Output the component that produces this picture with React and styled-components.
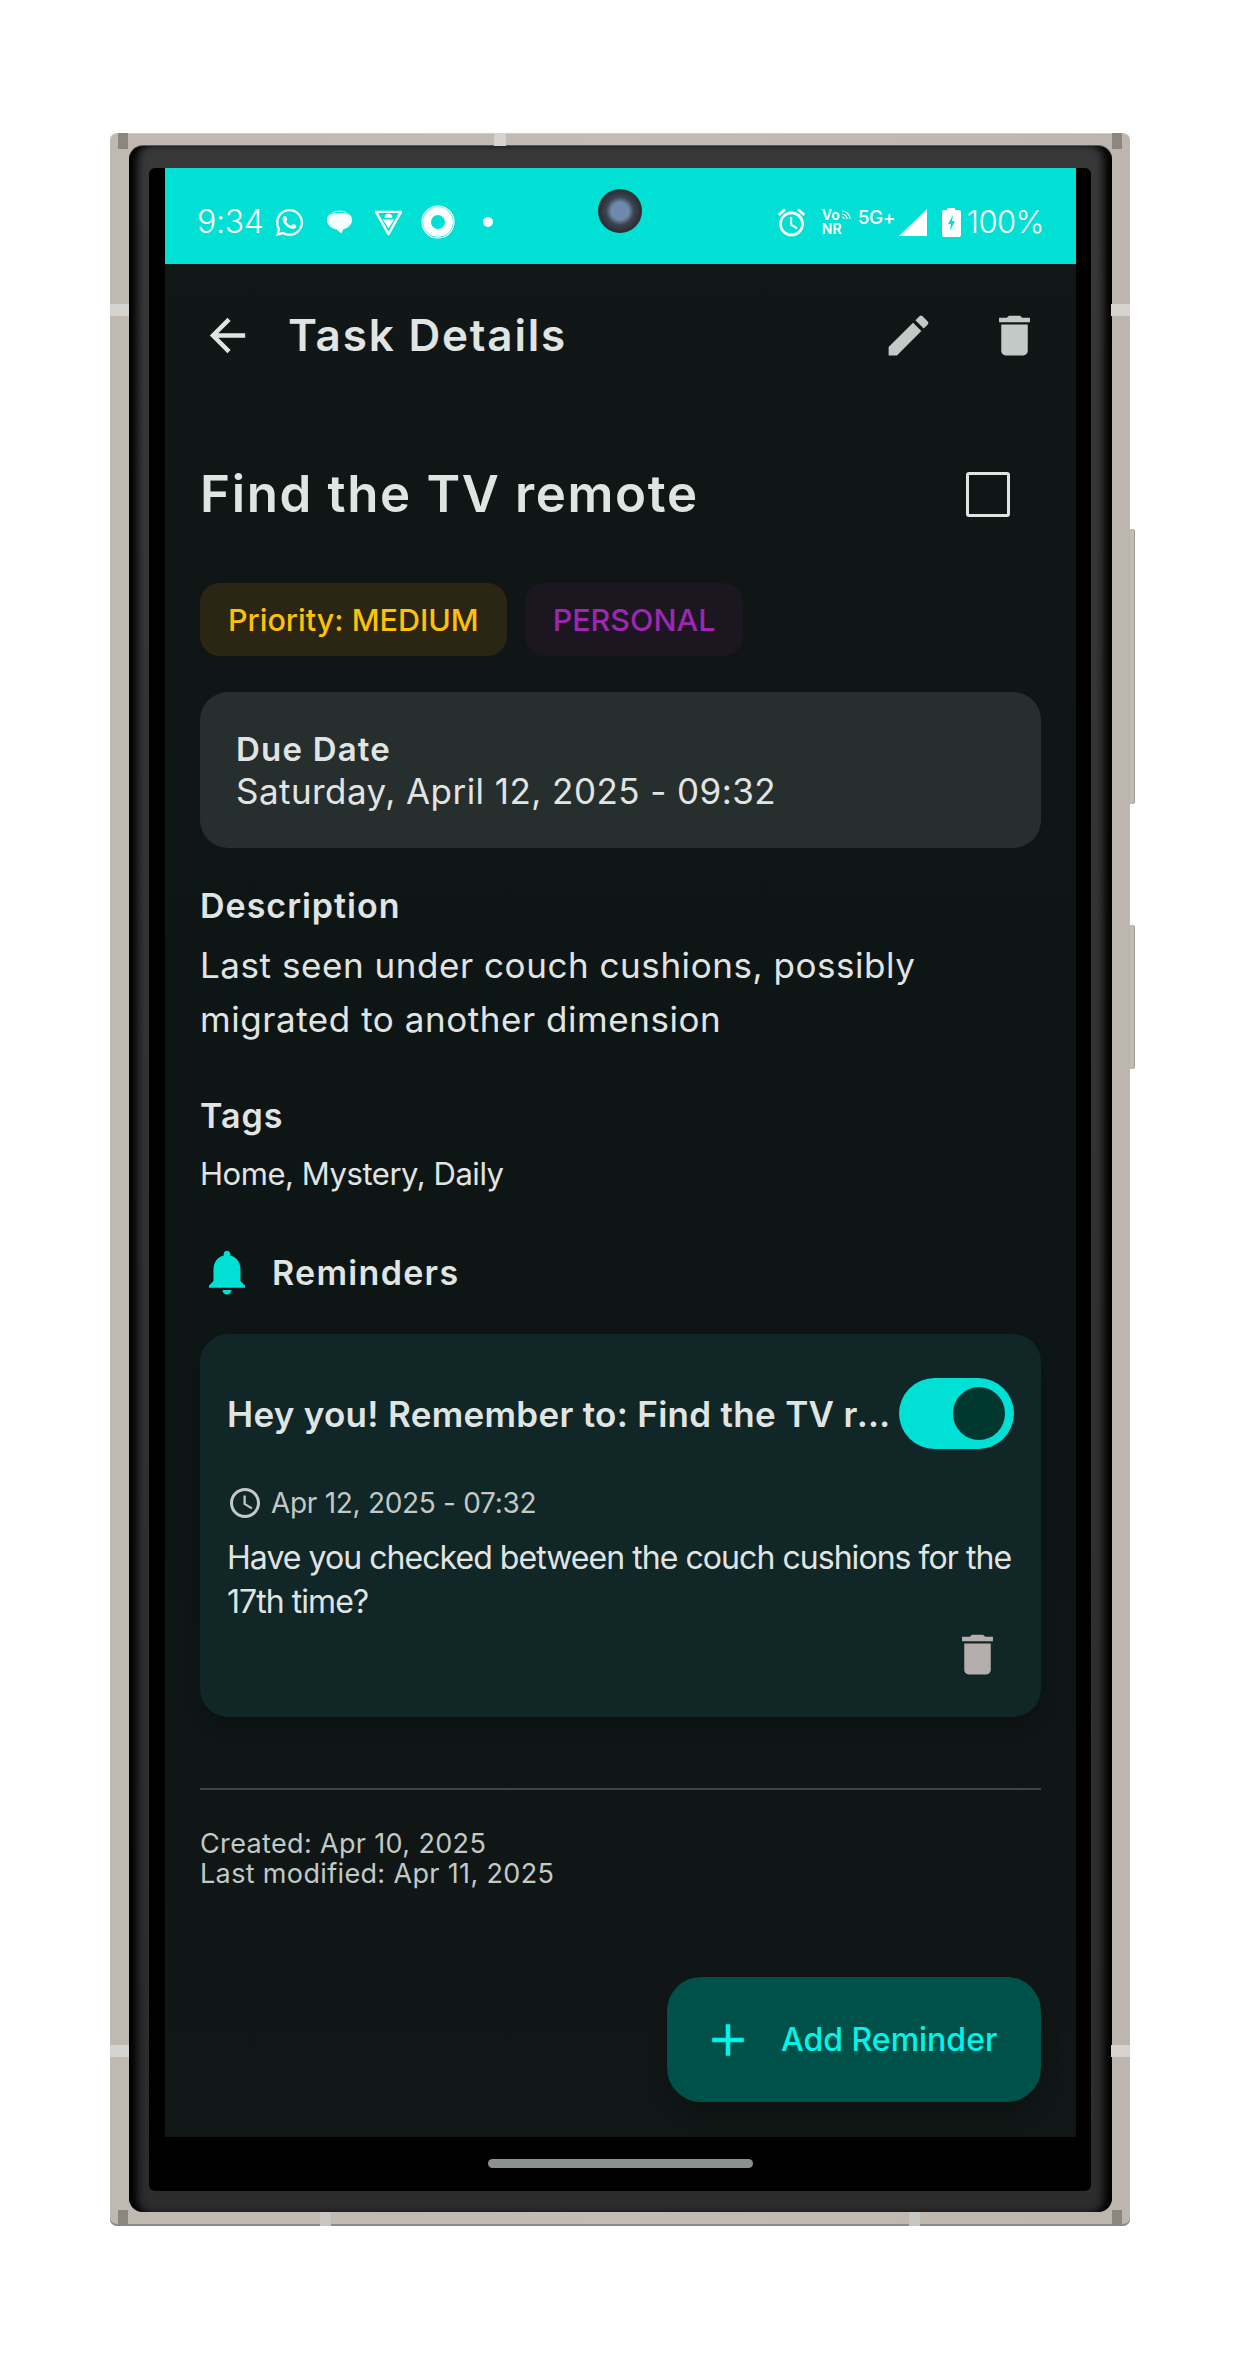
import React from 'react';
import styled, { createGlobalStyle } from 'styled-components';
import { MdArrowBack, MdEdit, MdDelete, MdNotifications, MdAccessTime, MdAdd, MdOutlineAlarm } from 'react-icons/md';
import { FaWhatsapp } from 'react-icons/fa';

const Global = createGlobalStyle`
  * { box-sizing: border-box; }
  html, body { margin: 0; background: #fff; }
  body { font-family: Inter, "Liberation Sans", sans-serif; }
`;

const Page = styled.div`
  width: 1245px;
  height: 2359px;
  padding: 133px 115px 0 110px;
`;
const Frame = styled.div`
  position: relative;
  height: 2093px;
  padding: 13px 18px 14px 19px;
  border-radius: 7px;
  background: linear-gradient(90deg, #bfb9b2 0%, #c2bcb5 50%, #bcb6af 100%);
  box-shadow: inset 0 1px 0 #d0ccc6, inset 0 -2px 0 #8f8b85;
`;
const CornerTab = styled.span`
  position: absolute;
  width: 10px;
  height: 16px;
  background: #8b8780;
  ${p => p.$v}: 0;
  ${p => p.$h}: 8px;
`;
const Band = styled.span`
  position: absolute;
  background: #d6d4d0;
`;
const TopBand = styled(Band)`
  top: 0; width: 12px; height: 13px; left: ${p => p.$x}px;
`;
const BottomBand = styled(Band)`
  bottom: 0; width: 11px; height: 14px; left: ${p => p.$x}px; background: #c8c6c2;
`;
const SideBand = styled(Band)`
  width: 19px; height: 12px; top: ${p => p.$y}px; ${p => p.$side}: 0;
`;
const SideKey = styled.span`
  position: absolute;
  right: -5px;
  width: 5px;
  top: ${p => p.$y}px;
  height: ${p => p.$h}px;
  background: #c2bcb5;
  border-radius: 0 3px 3px 0;
  box-shadow: inset -1px 0 0 #a09c95;
`;
const Bezel = styled.div`
  height: 100%;
  padding: 22px 21px 21px 20px;
  border-radius: 14px;
  background: linear-gradient(180deg, #383838 0%, #2c2c2c 100%);
  box-shadow: inset 12px 0 8px -4px #000, inset -12px 0 8px -4px #000, 0 -1px 0 #5c5a57;
`;
const Glass = styled.div`
  height: 100%;
  padding: 0 15px 0 16px;
  border-radius: 6px;
  background: #000;
  display: flex;
  flex-direction: column;
`;
const Screen = styled.div`
  position: relative;
  height: 1969px;
  background: linear-gradient(180deg, #111716 0%, #0e1515 40%, #0e1515 70%, #111716 100%);
  color: #e0e5e3;
`;
const HomeArea = styled.div`
  flex: 1;
  display: flex;
  justify-content: center;
  padding-top: 22px;
`;
const HomeBar = styled.div`
  width: 265px;
  height: 9px;
  border-radius: 5px;
  background: #8a9190;
`;

const StatusBar = styled.div`
  height: 96px;
  background: #00e0d5;
  color: #fff;
  display: flex;
  align-items: center;
  justify-content: space-between;
  padding: 12px 32px 0;
`;
const StatusGroup = styled.div`
  display: flex;
  align-items: center;
`;
const Clock = styled.span`
  font-size: 32px;
  font-weight: 300;
  line-height: 30px;
  letter-spacing: -0.3px;
  margin-right: 10px;
`;
const Percent = styled.span`
  font-size: 31px;
  font-weight: 300;
  line-height: 30px;
  letter-spacing: -0.6px;
  margin-left: 6px;
`;
const VoStack = styled.span`
  display: flex;
  flex-direction: column;
  width: 30px;
  font-size: 14px;
  font-weight: 600;
  line-height: 14px;
  margin: 0 6px 0 14px;
`;
const VoLine = styled.span`
  display: flex;
  align-items: center;
  gap: 1px;
`;
const FiveG = styled.span`
  font-size: 19px;
  font-weight: 500;
  line-height: 17px;
  width: 36px;
  letter-spacing: -0.5px;
  margin-bottom: 10px;
`;
const Camera = styled.div`
  position: absolute;
  left: 433px;
  top: 21px;
  width: 44px;
  height: 44px;
  border-radius: 50%;
  background: radial-gradient(circle, #6f89ad 0 28%, #3a4350 45%, #2a2c30 70%, #55585c 100%);
`;

const Toolbar = styled.div`
  height: 142px;
  display: flex;
  align-items: center;
  padding: 0 35px 0 36px;
`;
const ToolTitle = styled.h1`
  flex: 1;
  margin: 0 0 0 34px;
  font-size: 44px;
  font-weight: 600;
  line-height: 50px;
  letter-spacing: 1.8px;
  color: #e0e5e3;
`;
const IconBox = styled.span`
  display: inline-flex;
  align-items: center;
  justify-content: center;
  flex: none;
  color: ${p => p.$color || '#c2c9c6'};
  margin-left: ${p => p.$gap || 0}px;
`;
const Content = styled.div`
  padding: 43px 35px 0;
`;
const TitleRow = styled.div`
  height: 90px;
  display: flex;
  align-items: center;
  justify-content: space-between;
  padding-right: 31px;
`;
const Title = styled.h2`
  margin: 0;
  font-size: 51px;
  font-weight: 600;
  line-height: 60px;
  letter-spacing: 1.65px;
  color: #e0e5e3;
`;
const Check = styled.span`
  width: 44px;
  height: 45px;
  border: 3.5px solid #dfe4e2;
  border-radius: 3px;
`;
const Chips = styled.div`
  display: flex;
  gap: 18px;
  margin-top: 44px;
`;
const Chip = styled.span`
  height: 73px;
  display: flex;
  align-items: center;
  padding: 0 ${p => p.$pad}px;
  border-radius: 20px;
  font-size: 30.5px;
  font-weight: 500;
  background: ${p => p.$bg};
  color: ${p => p.$fg};
`;
const DueCard = styled.div`
  height: 156px;
  margin-top: 36px;
  padding: 37px 36px 0;
  border-radius: 28px;
  background: #272e2e;
`;
const DueLabel = styled.div`
  font-size: 33px;
  font-weight: 600;
  line-height: 40px;
  letter-spacing: 1.2px;
`;
const DueValue = styled.div`
  font-size: 35px;
  font-weight: 400;
  line-height: 44px;
  letter-spacing: 0.45px;
`;
const Heading = styled.h3`
  margin: ${p => p.$top}px 0 0;
  font-size: 34px;
  font-weight: 600;
  line-height: 40px;
  letter-spacing: 1px;
`;
const Body = styled.p`
  margin: 13px 0 0;
  font-size: 35px;
  line-height: 53.5px;
  font-weight: 400;
  letter-spacing: 0.55px;
`;
const TagText = styled.p`
  margin: 18px 0 0;
  font-size: 31px;
  line-height: 40px;
  letter-spacing: -0.45px;
`;
const ReminderHead = styled.div`
  height: 50px;
  margin-top: 53px;
  display: flex;
  align-items: center;
  gap: 18px;
  font-size: 34px;
  font-weight: 600;
  letter-spacing: 1.3px;
`;
const ReminderCard = styled.div`
  margin-top: 37px;
  padding: 44px 27px 36px;
  border-radius: 28px;
  background: #102627;
  box-shadow: 0 10px 16px rgba(0, 0, 0, 0.18);
`;
const ReminderTop = styled.div`
  display: flex;
  align-items: center;
`;
const ReminderTitle = styled.div`
  flex: 1;
  min-width: 0;
  font-size: 35px;
  font-weight: 600;
  letter-spacing: 0.3px;
  white-space: nowrap;
  overflow: hidden;
  text-overflow: ellipsis;
`;
const Toggle = styled.span`
  flex: none;
  width: 115px;
  height: 71px;
  border-radius: 36px;
  background: #00e0d5;
  display: flex;
  align-items: center;
  justify-content: flex-end;
  padding-right: 9px;
`;
const Thumb = styled.span`
  width: 52px;
  height: 53px;
  border-radius: 50%;
  background: #00382f;
`;
const DateRow = styled.div`
  height: 40px;
  margin-top: 34px;
  display: flex;
  align-items: center;
  gap: 8px;
  font-size: 28px;
  letter-spacing: -0.3px;
  color: #c2c9c6;
`;
const ReminderBody = styled.p`
  margin: 13px 0 0;
  font-size: 32px;
  line-height: 44px;
  letter-spacing: -0.95px;
  color: #e0e5e3;
`;
const TrashRow = styled.div`
  margin-top: 4px;
  padding-right: 10px;
  display: flex;
  justify-content: flex-end;
`;
const Divider = styled.div`
  height: 2px;
  margin-top: 71px;
  background: #3e4444;
`;
const Meta = styled.div`
  margin-top: 39px;
  font-size: 27px;
  line-height: 30px;
  letter-spacing: 0.35px;
  color: #c2c9c6;
`;
const Fab = styled.div`
  position: absolute;
  right: 35px;
  bottom: 35px;
  width: 374px;
  height: 125px;
  border-radius: 34px;
  background: #00514a;
  color: #00f5e8;
  display: flex;
  align-items: center;
  padding-left: 34px;
  gap: 26px;
  font-size: 32px;
  font-weight: 500;
  box-shadow: 0 12px 20px rgba(0, 0, 0, 0.2);
`;

const Bubble = () => (
  <svg width="27" height="26" viewBox="0 0 28 26" fill="#f2fffe">
    <ellipse cx="14" cy="11" rx="13" ry="10" />
    <path d="M9 19l7 6 3-7z" />
    <path d="M2 6c4-4 20-4 24 0" fill="none" stroke="#00e0d5" strokeWidth="1" />
  </svg>
);
const Shield = () => (
  <svg width="29" height="27" viewBox="0 0 30 28" fill="none">
    <path d="M2 3h26L15 26z" stroke="#fff" strokeWidth="2.5" strokeLinejoin="round" />
    <path d="M9 11h12l-6 9z M11 9a4 4 0 0 1 8 0z" fill="#fff" />
  </svg>
);
const Ring = () => (
  <svg width="34" height="34" viewBox="0 0 34 34" fill="none">
    <circle cx="17" cy="17" r="11" stroke="#fff" strokeWidth="8" />
    <circle cx="17" cy="17" r="16" stroke="#fff" strokeWidth="1.2" />
  </svg>
);
const Dot = () => (
  <svg width="10" height="10" viewBox="0 0 10 10"><circle cx="5" cy="5" r="5" fill="#fff" /></svg>
);
const Signal = () => (
  <svg width="28" height="27" viewBox="0 0 28 27"><path d="M28 0v27H0z" fill="#fff" /></svg>
);
const Battery = () => (
  <svg width="19" height="29" viewBox="0 0 19 29">
    <path d="M5 2V0h8v2h4a2 2 0 0 1 2 2v23a2 2 0 0 1-2 2H2a2 2 0 0 1-2-2V4a2 2 0 0 1 2-2z" fill="#fff" />
    <path d="M11 7l-5 9h3l-1 7 5-10h-3z" fill="#00e0d5" />
  </svg>
);
const Arcs = () => (
  <svg width="10" height="10" viewBox="0 0 10 10" fill="none" stroke="#fff" strokeWidth="1.2">
    <path d="M1 1a8 8 0 0 1 8 8M1 4a5 5 0 0 1 5 5M1 7a2 2 0 0 1 2 2" />
  </svg>
);

export default function App() {
  return (
    <Page>
      <Global />
      <Frame>
        <CornerTab $v="top" $h="left" />
        <CornerTab $v="top" $h="right" />
        <CornerTab $v="bottom" $h="left" />
        <CornerTab $v="bottom" $h="right" />
        <TopBand $x={384} />
        <BottomBand $x={210} />
        <BottomBand $x={799} />
        <SideBand $side="left" $y={171} />
        <SideBand $side="right" $y={171} />
        <SideBand $side="left" $y={1912} />
        <SideBand $side="right" $y={1912} />
        <SideKey $y={396} $h={275} />
        <SideKey $y={792} $h={144} />
        <Bezel>
          <Glass>
            <Screen>
              <StatusBar>
                <StatusGroup>
                  <Clock>9:34</Clock>
                  <FaWhatsapp size={31} />
                  <IconBox $color="#fff" $gap={21}><Bubble /></IconBox>
                  <IconBox $color="#fff" $gap={21}><Shield /></IconBox>
                  <IconBox $color="#fff" $gap={18}><Ring /></IconBox>
                  <IconBox $color="#fff" $gap={28}><Dot /></IconBox>
                </StatusGroup>
                <StatusGroup>
                  <MdOutlineAlarm size={33} />
                  <VoStack>
                    <VoLine>Vo<Arcs /></VoLine>
                    <VoLine>NR</VoLine>
                  </VoStack>
                  <FiveG>5G+</FiveG>
                  <IconBox $color="#fff" $gap={5}><Signal /></IconBox>
                  <IconBox $color="#fff" $gap={15}><Battery /></IconBox>
                  <Percent>100%</Percent>
                </StatusGroup>
              </StatusBar>
              <Camera />
              <Toolbar>
                <IconBox $color="#e0e5e3"><MdArrowBack size={53} /></IconBox>
                <ToolTitle>Task Details</ToolTitle>
                <IconBox><MdEdit size={53} /></IconBox>
                <IconBox $gap={53}><MdDelete size={53} /></IconBox>
              </Toolbar>
              <Content>
                <TitleRow>
                  <Title>Find the TV remote</Title>
                  <Check />
                </TitleRow>
                <Chips>
                  <Chip $pad={28} $bg="#2b2614" $fg="#ffc107">Priority: MEDIUM</Chip>
                  <Chip $pad={28} $bg="#1c1620" $fg="#9c27b0">PERSONAL</Chip>
                </Chips>
                <DueCard>
                  <DueLabel>Due Date</DueLabel>
                  <DueValue>Saturday, April 12, 2025 - 09:32</DueValue>
                </DueCard>
                <Heading $top={38}>Description</Heading>
                <Body>Last seen under couch cushions, possibly migrated to another dimension</Body>
                <Heading $top={50}>Tags</Heading>
                <TagText>Home, Mystery, Daily</TagText>
                <ReminderHead>
                  <IconBox $color="#00e0d5"><MdNotifications size={54} /></IconBox>
                  Reminders
                </ReminderHead>
                <ReminderCard>
                  <ReminderTop>
                    <ReminderTitle>Hey you! Remember to: Find the TV remote</ReminderTitle>
                    <Toggle><Thumb /></Toggle>
                  </ReminderTop>
                  <DateRow>
                    <MdAccessTime size={36} />
                    Apr 12, 2025 - 07:32
                  </DateRow>
                  <ReminderBody>Have you checked between the couch cushions for the 17th time?</ReminderBody>
                  <TrashRow><IconBox $color="#b5aeac"><MdDelete size={53} /></IconBox></TrashRow>
                </ReminderCard>
                <Divider />
                <Meta>
                  <div>Created: Apr 10, 2025</div>
                  <div>Last modified: Apr 11, 2025</div>
                </Meta>
              </Content>
              <Fab>
                <MdAdd size={54} />
                Add Reminder
              </Fab>
            </Screen>
            <HomeArea><HomeBar /></HomeArea>
          </Glass>
        </Bezel>
      </Frame>
    </Page>
  );
}
